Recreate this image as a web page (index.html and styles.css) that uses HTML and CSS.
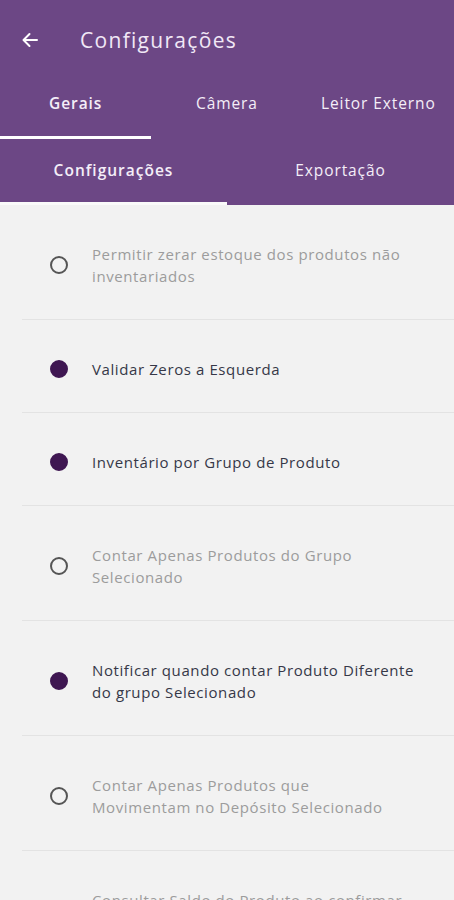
FILE: index.html
```html
<!DOCTYPE html>
<html>
	<head>
		<meta charset="utf-8">
		<title>Configurações</title>
		<link rel="stylesheet" href="styles.css">
	</head>
	<body>
		<div class="header">
			<div class="appbar">
				<svg class="back" width="20" height="20" viewBox="0 0 20 20">
					<path d="M17 10H4M9.5 4L3.5 10L9.5 16" fill="none" stroke="#fff" stroke-width="2" stroke-linecap="round" stroke-linejoin="round"/>
				</svg>
				<div class="title">Configurações</div>
			</div>

			<div class="tabs main-tabs">
				<div class="tab active">Gerais</div>
				<div class="tab">Câmera</div>
				<div class="tab">Leitor Externo</div>
			</div>

			<div class="tabs sub-tabs">
				<div class="tab active">Configurações</div>
				<div class="tab">Exportação</div>
			</div>
		</div>

		<div class="options">
			<div class="option">
				<span class="radio"></span>
				<span class="label">Permitir zerar estoque dos produtos não inventariados</span>
			</div>
			<div class="option on">
				<span class="radio"></span>
				<span class="label">Validar Zeros a Esquerda</span>
			</div>
			<div class="option on">
				<span class="radio"></span>
				<span class="label">Inventário por Grupo de Produto</span>
			</div>
			<div class="option">
				<span class="radio"></span>
				<span class="label">Contar Apenas Produtos do Grupo Selecionado</span>
			</div>
			<div class="option on">
				<span class="radio"></span>
				<span class="label">Notificar quando contar Produto Diferente do grupo Selecionado</span>
			</div>
			<div class="option">
				<span class="radio"></span>
				<span class="label">Contar Apenas Produtos que<br>Movimentam no Depósito Selecionado</span>
			</div>
			<div class="option">
				<span class="radio"></span>
				<span class="label">Consultar Saldo do Produto ao confirmar<br>a contagem</span>
			</div>
		</div>
	</body>
</html>
```

FILE: styles.css
```css
body {margin: 0; padding: 0; height: 100vh; overflow: hidden; background-color: #f2f2f2; font-family: "Open Sans", "Noto Sans", sans-serif;}

.header {background-color: #6c4785; color: #fff;}

.appbar {display: flex; align-items: center; height: 80px; padding-left: 20px;}
.appbar .back {flex: none;}
.appbar .title {margin-left: 40px; font-size: 21px; color: #f1e8f6; letter-spacing: 1.3px;}

.tabs {display: flex;}
.tabs .tab {flex: 1; text-align: center; font-size: 15.5px; line-height: 22px; color: #f4eef8; letter-spacing: 0.9px; border-bottom: 3px solid transparent; box-sizing: border-box;}
.tabs .tab.active {font-weight: 600; border-bottom-color: #fff;}

.main-tabs .tab {height: 59px; padding-top: 12px;}
.sub-tabs .tab {height: 66px; padding-top: 20px;}
.sub-tabs .tab.active {letter-spacing: 1px; border-bottom-color: #fafafa;}

.options {padding-left: 22px;}
.option {display: flex; align-items: center; padding: 38px 0 32px 0; border-bottom: 1px solid #e3e3e3;}
.option .radio {flex: none; width: 14px; height: 14px; margin-left: 28px; margin-right: 24px; border: 2.5px solid #555; border-radius: 50%;}
.option .label {font-size: 15px; line-height: 22px; color: #9c9c9c; letter-spacing: 0.6px; padding-right: 36px;}

.option.on .radio {background-color: #3f1752; border-color: #3f1752;}
.option.on .label {color: #363848;}
```
